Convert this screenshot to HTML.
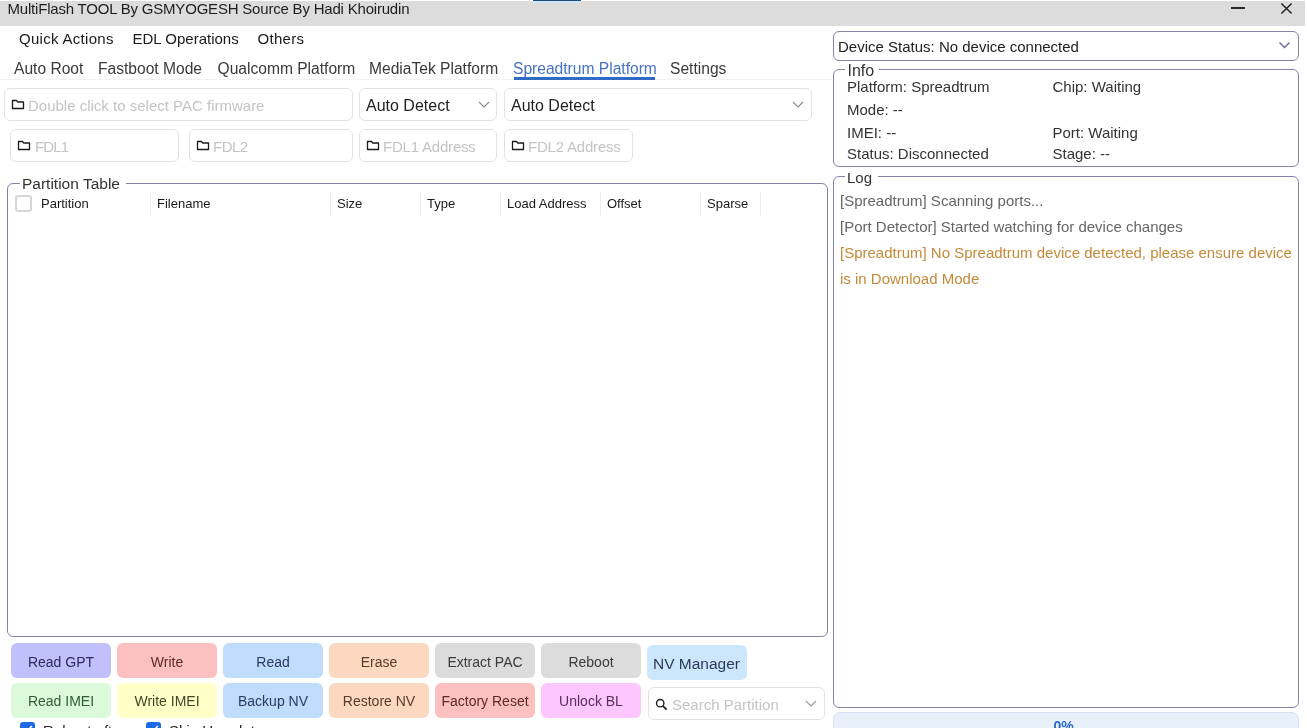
<!DOCTYPE html>
<html><head><meta charset="utf-8">
<style>
*{box-sizing:border-box;margin:0;padding:0}
html,body{width:1307px;height:728px;overflow:hidden;background:#fff;font-family:"Liberation Sans",sans-serif;color:#222}
.a{position:absolute}
.t{position:absolute;white-space:nowrap;font-size:15px;line-height:15px}
.box{position:absolute;border:1px solid #e2e2e2;border-radius:6px;background:#fff}
.gb{position:absolute;border:1px solid #8484a8;border-radius:6px}
.btn{position:absolute;border-radius:6px;text-align:center;font-size:14px;line-height:35px;padding-top:2px;white-space:nowrap;width:100px;height:35px}
.ph{color:#c4c4c4}
.hd{font-size:13px;line-height:13px;color:#1a1a1a}
.sep{position:absolute;top:192px;width:1px;height:23px;background:#ececec}
.fold{position:absolute}
.lg{color:#666}
.or{color:#c48a3a}
</style></head><body><div id="root" style="position:absolute;left:0;top:0;width:1307px;height:728px;will-change:transform">
<!-- title bar -->
<div class="a" style="left:0;top:1px;width:1305px;height:25px;background:#dcdcdc"></div>
<div class="a" style="left:533px;top:1px;width:48px;height:2px;background:#cfe5f8"></div><div class="a" style="left:533px;top:0;width:48px;height:1px;background:#234c74"></div>
<div class="t" style="left:7.5px;top:0.5px;color:#1e1e1e;letter-spacing:-0.2px">MultiFlash TOOL By GSMYOGESH Source By Hadi Khoirudin</div>
<div class="a" style="left:1231px;top:7.2px;width:14px;height:1.8px;background:#2a2a2a"></div>
<svg class="a" style="left:1280px;top:2px" width="13" height="13" viewBox="0 0 13 13"><path d="M1.4 1.4L11.6 11.6M11.6 1.4L1.4 11.6" stroke="#1e1e1e" stroke-width="1.4"/></svg>

<!-- menu tabs -->
<div class="t" style="left:19px;top:30.5px;color:#1a1a1a;letter-spacing:0.3px">Quick Actions</div>
<div class="t" style="left:132.5px;top:30.5px;color:#1a1a1a">EDL Operations</div>
<div class="t" style="left:257.5px;top:30.5px;color:#1a1a1a;letter-spacing:0.3px">Others</div>

<div class="t" style="left:14px;top:61px;color:#3a3a3a;font-size:15.6px">Auto Root</div>
<div class="t" style="left:98px;top:61px;color:#3a3a3a;font-size:15.6px">Fastboot Mode</div>
<div class="t" style="left:217.5px;top:61px;color:#3a3a3a;font-size:15.6px">Qualcomm Platform</div>
<div class="t" style="left:369px;top:61px;color:#3a3a3a;font-size:15.6px">MediaTek Platform</div>
<div class="t" style="left:513px;top:61px;color:#4872c2;font-size:15.6px">Spreadtrum Platform</div>
<div class="t" style="left:670px;top:61px;color:#3a3a3a;font-size:15.6px">Settings</div>
<div class="a" style="left:0;top:79px;width:831px;height:1px;background:#f1f1f1"></div>
<div class="a" style="left:514px;top:77px;width:141px;height:2.5px;background:#2f6bc5"></div>

<!-- inputs row -->
<div class="box" style="left:4px;top:88px;width:349px;height:33px"></div>
<div class="box" style="left:359px;top:88px;width:138px;height:33px"></div>
<div class="box" style="left:504px;top:88px;width:308px;height:33px"></div>
<div class="box" style="left:10px;top:129px;width:169px;height:33px"></div>
<div class="box" style="left:189px;top:129px;width:164px;height:33px"></div>
<div class="box" style="left:359px;top:129px;width:138px;height:33px"></div>
<div class="box" style="left:504px;top:129px;width:129px;height:33px"></div>

<svg class="fold" style="left:11px;top:99px" width="14" height="11" viewBox="0 0 14 11"><path d="M1.5 1.5H5.5L6.8 3H12.5V9.5H1.5Z" fill="none" stroke="#1a1a1a" stroke-width="1.3" stroke-linejoin="round"/></svg>
<div class="t ph" style="left:28px;top:98px">Double click to select PAC firmware</div>
<div class="t" style="left:366px;top:97.5px;font-size:16px;line-height:16px;color:#222">Auto Detect</div>
<svg class="a" style="left:478px;top:100px" width="12" height="9" viewBox="0 0 12 9"><path d="M1 2L6 7L11 2" fill="none" stroke="#8a8a8a" stroke-width="1.1"/></svg>
<div class="t" style="left:511px;top:97.5px;font-size:16px;line-height:16px;color:#222">Auto Detect</div>
<svg class="a" style="left:792px;top:100px" width="12" height="9" viewBox="0 0 12 9"><path d="M1 2L6 7L11 2" fill="none" stroke="#8a8a8a" stroke-width="1.1"/></svg>

<svg class="fold" style="left:17px;top:140px" width="14" height="11" viewBox="0 0 14 11"><path d="M1.5 1.5H5.5L6.8 3H12.5V9.5H1.5Z" fill="none" stroke="#1a1a1a" stroke-width="1.3" stroke-linejoin="round"/></svg>
<div class="t ph" style="left:35px;top:139px;letter-spacing:-0.9px">FDL1</div>
<svg class="fold" style="left:196px;top:140px" width="14" height="11" viewBox="0 0 14 11"><path d="M1.5 1.5H5.5L6.8 3H12.5V9.5H1.5Z" fill="none" stroke="#1a1a1a" stroke-width="1.3" stroke-linejoin="round"/></svg>
<div class="t ph" style="left:213px;top:139px;letter-spacing:-0.5px">FDL2</div>
<svg class="fold" style="left:366px;top:140px" width="14" height="11" viewBox="0 0 14 11"><path d="M1.5 1.5H5.5L6.8 3H12.5V9.5H1.5Z" fill="none" stroke="#1a1a1a" stroke-width="1.3" stroke-linejoin="round"/></svg>
<div class="t ph" style="left:383px;top:139px;letter-spacing:-0.2px">FDL1 Address</div>
<svg class="fold" style="left:511px;top:140px" width="14" height="11" viewBox="0 0 14 11"><path d="M1.5 1.5H5.5L6.8 3H12.5V9.5H1.5Z" fill="none" stroke="#1a1a1a" stroke-width="1.3" stroke-linejoin="round"/></svg>
<div class="t ph" style="left:528px;top:139px;letter-spacing:-0.2px">FDL2 Address</div>

<!-- partition table -->
<div class="gb" style="left:7px;top:183px;width:821px;height:454px"></div>
<div class="a" style="left:20px;top:174px;width:106px;height:18px;background:#fff"></div>
<div class="t" style="left:22px;top:175.5px;color:#333;font-size:15.5px">Partition Table</div>
<div class="a" style="left:14.5px;top:194.5px;width:17px;height:17px;border:2px solid #d6d6d6;border-radius:3px;background:#fff"></div>
<div class="t hd" style="left:41px;top:196.5px">Partition</div>
<div class="sep" style="left:150px"></div>
<div class="t hd" style="left:157px;top:196.5px">Filename</div>
<div class="sep" style="left:330px"></div>
<div class="t hd" style="left:337px;top:196.5px">Size</div>
<div class="sep" style="left:420px"></div>
<div class="t hd" style="left:427px;top:196.5px">Type</div>
<div class="sep" style="left:500px"></div>
<div class="t hd" style="left:507px;top:196.5px">Load Address</div>
<div class="sep" style="left:600px"></div>
<div class="t hd" style="left:607px;top:196.5px">Offset</div>
<div class="sep" style="left:700px"></div>
<div class="t hd" style="left:707px;top:196.5px">Sparse</div>
<div class="sep" style="left:760px"></div>

<!-- right panel -->
<div class="gb" style="left:833px;top:31px;width:466px;height:30px"></div>
<div class="t" style="left:838px;top:39px;color:#222">Device Status: No device connected</div>
<svg class="a" style="left:1278px;top:40px" width="13" height="10" viewBox="0 0 13 10"><path d="M1.5 2.5L6.5 7.5L11.5 2.5" fill="none" stroke="#6a6aa8" stroke-width="1.4"/></svg>

<div class="gb" style="left:833px;top:69px;width:466px;height:98px"></div>
<div class="a" style="left:845px;top:62px;width:34px;height:14px;background:#fff"></div>
<div class="t" style="left:847.5px;top:62.5px;color:#333;font-size:16px;line-height:16px">Info</div>
<div class="t" style="left:847px;top:79px;color:#333">Platform: Spreadtrum</div>
<div class="t" style="left:1052.5px;top:79px;color:#333">Chip: Waiting</div>
<div class="t" style="left:847px;top:102px;color:#333">Mode: --</div>
<div class="t" style="left:847px;top:125px;color:#333">IMEI: --</div>
<div class="t" style="left:1052.5px;top:125px;color:#333">Port: Waiting</div>
<div class="t" style="left:847px;top:145.5px;color:#333">Status: Disconnected</div>
<div class="t" style="left:1052.5px;top:145.5px;color:#333">Stage: --</div>

<div class="gb" style="left:833px;top:176px;width:466px;height:532px"></div>
<div class="a" style="left:845px;top:168px;width:33px;height:16px;background:#fff"></div>
<div class="t" style="left:847px;top:169.5px;color:#333">Log</div>
<div class="t lg" style="left:840px;top:193px">[Spreadtrum] Scanning ports...</div>
<div class="t lg" style="left:840px;top:218.5px">[Port Detector] Started watching for device changes</div>
<div class="t or" style="left:840px;top:245px">[Spreadtrum] No Spreadtrum device detected, please ensure device</div>
<div class="t or" style="left:840px;top:271px">is in Download Mode</div>

<div class="a" style="left:833px;top:712px;width:466px;height:30px;background:#e8f0fc;border:1px solid #d6e0f2;border-radius:7px"></div>
<div class="t" style="left:1053.5px;top:719px;color:#2b6acc;font-size:14px;font-weight:bold">0%</div>

<!-- buttons -->
<div class="btn" style="left:11px;top:643px;background:#c0c0fc;color:#2a2a5a">Read GPT</div>
<div class="btn" style="left:117px;top:643px;background:#fcc0c0;color:#5a2a2a">Write</div>
<div class="btn" style="left:223px;top:643px;background:#c0dcfc;color:#2a3a5a">Read</div>
<div class="btn" style="left:329px;top:643px;background:#fcd8c0;color:#5a3a2a">Erase</div>
<div class="btn" style="left:435px;top:643px;background:#dcdcdc;color:#3a3a3a">Extract PAC</div>
<div class="btn" style="left:541px;top:643px;background:#dcdcdc;color:#3a3a3a">Reboot</div>
<div class="btn" style="left:647px;top:645px;background:#cce6fc;color:#2a3a5a;font-size:15.5px;text-align:left;padding-left:6px;padding-top:1px">NV Manager</div>
<div class="btn" style="left:11px;top:683px;padding-top:1px;background:#dafada;color:#355a35">Read IMEI</div>
<div class="btn" style="left:117px;top:683px;padding-top:1px;background:#ffffc8;color:#45452a">Write IMEI</div>
<div class="btn" style="left:223px;top:683px;padding-top:1px;background:#c0dcfc;color:#2a3a5a">Backup NV</div>
<div class="btn" style="left:329px;top:683px;padding-top:1px;background:#fcd8c0;color:#5a3a2a">Restore NV</div>
<div class="btn" style="left:435px;top:683px;padding-top:1px;background:#fcc0c0;color:#5a2a2a">Factory Reset</div>
<div class="btn" style="left:541px;top:683px;padding-top:1px;background:#fec6fe;color:#5a2f5a">Unlock BL</div>
<div class="box" style="left:648px;top:687px;width:177px;height:33px"></div>
<svg class="a" style="left:655px;top:698px" width="13" height="13" viewBox="0 0 13 13"><circle cx="5.2" cy="5.2" r="3.7" fill="none" stroke="#1a1a1a" stroke-width="1.35"/><path d="M7.8 7.8L11.6 11.6" stroke="#1a1a1a" stroke-width="1.7"/></svg>
<div class="t ph" style="left:672px;top:697px">Search Partition</div>
<svg class="a" style="left:805px;top:699px" width="12" height="9" viewBox="0 0 12 9"><path d="M1 2L6 7L11 2" fill="none" stroke="#9a9a9a" stroke-width="1.1"/></svg>

<!-- bottom checkboxes (clipped) -->
<div class="a" style="left:20px;top:722px;width:15px;height:15px;background:#1c6ae6;border-radius:3px"></div><svg class="a" style="left:20px;top:722px" width="15" height="15" viewBox="0 0 15 15"><path d="M3.5 7.5L6.3 10.3L11.8 4" fill="none" stroke="#fff" stroke-width="1.6"/></svg>
<div class="t" style="left:43px;top:722.5px;color:#222">Reboot after</div>
<div class="a" style="left:146px;top:722px;width:15px;height:15px;background:#1c6ae6;border-radius:3px"></div><svg class="a" style="left:146px;top:722px" width="15" height="15" viewBox="0 0 15 15"><path d="M3.5 7.5L6.3 10.3L11.8 4" fill="none" stroke="#fff" stroke-width="1.6"/></svg>
<div class="t" style="left:169px;top:722.5px;color:#222">Skip Userdata</div>
</div></body></html>
